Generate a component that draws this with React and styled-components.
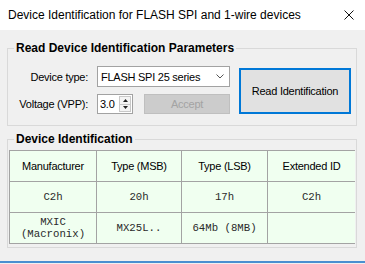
import React from 'react';
import styled, { createGlobalStyle } from 'styled-components';

const Global = createGlobalStyle`
  html, body { margin: 0; padding: 0; background: #f0f0f0; }
  body { width: 365px; height: 264px; overflow: hidden; }
  * { box-sizing: border-box; }
`;

const Window = styled.div`
  width: 365px;
  height: 264px;
  display: flex;
  flex-direction: column;
  background: #f0f0f0;
  font-family: "Liberation Sans", Arial, sans-serif;
  color: #000;
`;

const TitleBar = styled.div`
  height: 30px;
  flex: none;
  background: #fff;
  display: flex;
  align-items: center;
  justify-content: space-between;
  padding-left: 8px;
  font-size: 12px;
`;

const CloseButton = styled.div`
  width: 31px;
  height: 30px;
  display: flex;
  align-items: center;
  justify-content: center;
  padding-right: 2px;
`;

const Body = styled.div`
  flex: 1;
  padding: 11px 8px 0 7px;
  display: flex;
  flex-direction: column;
`;

const Group = styled.fieldset`
  margin: ${p => p.$mt || 0}px 0 0 0;
  padding: ${p => p.$pt}px 0 ${p => p.$pb}px 0;
  border: 1px solid #d9d9d9;
  min-width: 0;
`;

const Legend = styled.legend`
  margin-left: 6px;
  padding: 0 2px;
  font-weight: bold;
  font-size: 12px;
  line-height: 14px;
`;

const ParamGrid = styled.div`
  display: grid;
  grid-template-columns: 80px 133px 112px;
  grid-template-rows: 21px 20px;
  column-gap: 9px;
  row-gap: 7px;
  font-size: 11px;
  letter-spacing: -0.25px;
`;

const Label = styled.div`
  display: flex;
  align-items: center;
  justify-content: flex-end;
`;

const Combo = styled.div`
  background: #fff;
  border: 1px solid #a2a2a2;
  display: flex;
  align-items: center;
  justify-content: space-between;
  padding: 0 5px 0 3px;
`;

const Controls = styled.div`
  display: flex;
  gap: 11px;
`;

const Spin = styled.div`
  width: 36px;
  background: #fff;
  border: 1px solid #a2a2a2;
  display: flex;
  align-items: center;
  justify-content: space-between;
  padding: 1px 0 1px 2px;
`;

const SpinButtons = styled.div`
  width: 12px;
  height: 100%;
  display: flex;
  flex-direction: column;
  border: 1px solid #c8c8c8;
  margin-right: 1px;
`;

const SpinHalf = styled.div`
  flex: 1;
  display: flex;
  align-items: center;
  justify-content: center;
  background: #f4f4f4;
  border-top: ${p => (p.$lower ? '1px solid #c8c8c8' : 'none')};
`;

const Button = styled.div`
  display: flex;
  align-items: center;
  justify-content: center;
  background: ${p => (p.$disabled ? '#cccccc' : '#e1e1e1')};
  color: ${p => (p.$disabled ? '#a3a3a3' : '#000')};
  border: ${p => (p.$primary ? '2px solid #0078d7' : '1px solid #bfbfbf')};
  width: ${p => p.$w || 'auto'};
`;

const BigButton = styled(Button)`
  grid-column: 3;
  grid-row: 1 / span 2;
  height: 46px;
  align-self: center;
  margin-top: 1px;
`;

const Table = styled.div`
  display: grid;
  grid-template-columns: 86px 84px 85px 87px;
  grid-auto-rows: 30px;
  gap: 1px;
  padding: 1px;
  margin: 0 1px;
  background: #a3a3a3;
`;

const Cell = styled.div`
  background: #f0fff0;
  display: flex;
  flex-direction: column;
  align-items: center;
  justify-content: center;
  text-align: center;
  font-family: ${p => (p.$mono ? '"Liberation Mono", "Courier New", monospace' : '"Liberation Sans", Arial, sans-serif')};
  font-size: ${p => (p.$mono ? '10.7px' : '11px')};
  letter-spacing: ${p => (p.$mono ? '0' : '-0.25px')};
  line-height: ${p => (p.$mono ? '12px' : '13px')};
  color: ${p => (p.$mono ? '#2a2a2a' : '#000')};
`;

const WindowEdge = styled.div`
  flex: none;
  height: 2px;
  margin-bottom: 1px;
  background: #4a8fd0;
`;

const Chevron = () => (
  <svg width="8" height="5" viewBox="0 0 8 5">
    <polyline points="0.5,0.5 4,4 7.5,0.5" fill="none" stroke="#555" strokeWidth="1" />
  </svg>
);

const Tri = ({ down }) => (
  <svg width="5" height="3" viewBox="0 0 5 3">
    <polygon points={down ? '0,0 5,0 2.5,3' : '0,3 5,3 2.5,0'} fill="#222" />
  </svg>
);

const headers = ['Manufacturer', 'Type (MSB)', 'Type (LSB)', 'Extended ID'];
const rows = [
  [['C2h'], ['20h'], ['17h'], ['C2h']],
  [['MXIC', '(Macronix)'], ['MX25L..'], ['64Mb (8MB)'], []],
];

export default function App() {
  return (
    <Window>
      <Global />
      <TitleBar>
        <span>Device Identification for FLASH SPI and 1-wire devices</span>
        <CloseButton>
          <svg width="10" height="10" viewBox="0 0 10 10">
            <path d="M0.5 0.5 L9.5 9.5 M9.5 0.5 L0.5 9.5" stroke="#111" strokeWidth="1" fill="none" />
          </svg>
        </CloseButton>
      </TitleBar>
      <Body>
        <Group $pt={11} $pb={11}>
          <Legend>Read Device Identification Parameters</Legend>
          <ParamGrid>
            <Label>Device type:</Label>
            <Combo>
              <span>FLASH SPI 25 series</span>
              <Chevron />
            </Combo>
            <BigButton $primary>Read Identification</BigButton>
            <Label>Voltage (VPP):</Label>
            <Controls>
              <Spin>
                <span>3.0</span>
                <SpinButtons>
                  <SpinHalf><Tri /></SpinHalf>
                  <SpinHalf $lower><Tri down /></SpinHalf>
                </SpinButtons>
              </Spin>
              <Button $disabled $w="86px">Accept</Button>
            </Controls>
          </ParamGrid>
        </Group>
        <Group $mt={6} $pt={4} $pb={3}>
          <Legend>Device Identification</Legend>
          <Table>
            {headers.map(h => (
              <Cell key={h}>{h}</Cell>
            ))}
            {rows.map((r, i) =>
              r.map((lines, j) => (
                <Cell $mono key={`${i}-${j}`}>
                  {lines.map(l => (
                    <span key={l}>{l}</span>
                  ))}
                </Cell>
              ))
            )}
          </Table>
        </Group>
      </Body>
      <WindowEdge />
    </Window>
  );
}
